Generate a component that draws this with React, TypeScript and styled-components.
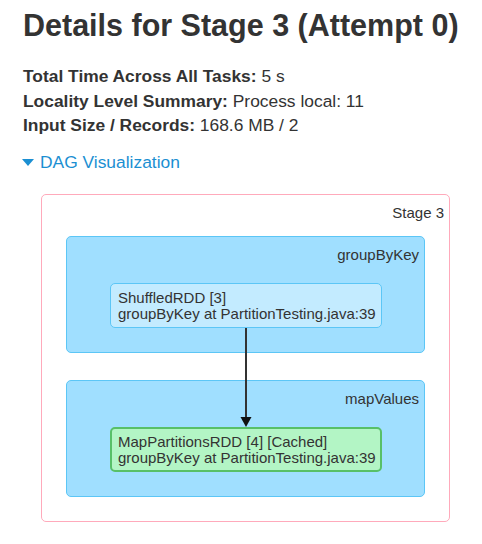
import React from "react";
import styled, { createGlobalStyle } from "styled-components";

const GlobalStyle = createGlobalStyle`
	body {
		margin: 0;
		background: #ffffff;
		font-family: "Liberation Sans", Arial, Helvetica, sans-serif;
		color: #333333;
	}
`;

const Page = styled.main`
	padding: 9px 0 0 23px;
`;

const Title = styled.h1`
	margin: 0;
	font-size: 30.5px;
	line-height: 33px;
	font-weight: 700;
	color: #333333;
`;

const Summary = styled.ul`
	list-style: none;
	margin: 22px 0 0;
	padding: 0;
	font-size: 17.4px;
	line-height: 24.5px;
`;

const SummaryItem = styled.li`
	white-space: nowrap;
`;

const Key = styled.strong`
	font-weight: 700;
`;

const Toggle = styled.a`
	display: flex;
	align-items: center;
	margin-top: 12.5px;
	font-size: 17.4px;
	line-height: 24px;
	color: #1b8fd2;
	text-decoration: none;
	cursor: pointer;
`;

const Caret = styled.span`
	width: 0;
	height: 0;
	margin: 1px 6px 0 -1px;
	border-left: 6px solid transparent;
	border-right: 6px solid transparent;
	border-top: 7px solid currentColor;
`;

const StageBox = styled.section`
	position: relative;
	box-sizing: border-box;
	width: 409px;
	height: 328px;
	margin: 20px 0 0 18px;
	padding: 10px 0 24px;
	border: 1px solid #ffaabb;
	border-radius: 5px;
	background: #ffffff;
	font-size: 15px;
	line-height: 16px;
`;

const Caption = styled.div`
	text-align: right;
	padding-right: 5px;
	color: #333333;
`;

const Cluster = styled.div<{ $first?: boolean }>`
	box-sizing: border-box;
	width: 359px;
	height: 117px;
	margin: ${(p) => (p.$first ? "15px" : "27px")} 24px 0;
	padding-top: 10px;
	border: 1px solid #5cc6f6;
	border-radius: 5px;
	background: #a0dfff;
`;

const ClusterLabel = styled(Caption)``;

const Node = styled.div<{ $cached?: boolean }>`
	box-sizing: border-box;
	display: flex;
	flex-direction: column;
	justify-content: center;
	width: 272px;
	height: 45px;
	margin: 20px 0 0 43px;
	padding-left: ${(p) => (p.$cached ? "6px" : "7px")};
	border: ${(p) => (p.$cached ? "2px solid #58c068" : "1px solid #5cc6f6")};
	border-radius: 5px;
	background: ${(p) => (p.$cached ? "#b3f5c5" : "#c3ebff")};
	color: #333333;
	white-space: nowrap;
`;

const Edge = styled.svg`
	position: absolute;
	left: 194px;
	top: 133px;
	overflow: visible;
`;

const summary: [string, string][] = [
	["Total Time Across All Tasks:", "5 s"],
	["Locality Level Summary:", "Process local: 11"],
	["Input Size / Records:", "168.6 MB / 2"],
];

const App: React.FC = () => {
	return (
		<>
			<GlobalStyle />
			<Page>
				<Title>Details for Stage 3 (Attempt 0)</Title>
				<Summary>
					{summary.map(([k, v]) => (
						<SummaryItem key={k}>
							<Key>{k}</Key> {v}
						</SummaryItem>
					))}
				</Summary>
				<Toggle>
					<Caret />
					DAG Visualization
				</Toggle>
				<StageBox>
					<Caption>Stage 3</Caption>
					<Cluster $first>
						<ClusterLabel>groupByKey</ClusterLabel>
						<Node>
							<span>ShuffledRDD [3]</span>
							<span>groupByKey at PartitionTesting.java:39</span>
						</Node>
					</Cluster>
					<Cluster>
						<ClusterLabel>mapValues</ClusterLabel>
						<Node $cached>
							<span>MapPartitionsRDD [4] [Cached]</span>
							<span>groupByKey at PartitionTesting.java:39</span>
						</Node>
					</Cluster>
					<Edge width="20" height="99" viewBox="0 0 20 99">
						<line x1="10" y1="0" x2="10" y2="90" stroke="#333333" strokeWidth="2" />
						<polygon points="4.5,89 15.5,89 10,99" fill="#111111" />
					</Edge>
				</StageBox>
			</Page>
		</>
	);
};

export default App;
